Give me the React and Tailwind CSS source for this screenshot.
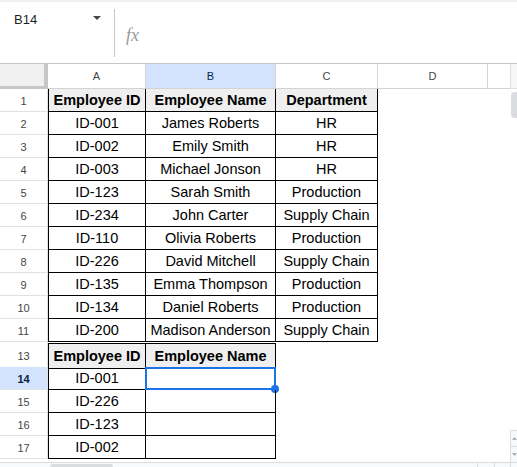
import React from "react";

const data = [
  ["ID-001", "James Roberts", "HR"],
  ["ID-002", "Emily Smith", "HR"],
  ["ID-003", "Michael Jonson", "HR"],
  ["ID-123", "Sarah Smith", "Production"],
  ["ID-234", "John Carter", "Supply Chain"],
  ["ID-110", "Olivia Roberts", "Production"],
  ["ID-226", "David Mitchell", "Supply Chain"],
  ["ID-135", "Emma Thompson", "Production"],
  ["ID-134", "Daniel Roberts", "Production"],
  ["ID-200", "Madison Anderson", "Supply Chain"],
];

const lookup = ["ID-001", "ID-226", "ID-123", "ID-002"];

const rowGrid = "grid grid-cols-[48px_98px_130px_102px_110px_22px]";

function RowHead({ n, active }) {
  return active ? (
    <div className="flex items-center justify-center pt-[2px] border-r border-b border-[#e1e1e1] bg-[#d3e3fd] text-[11px] font-bold text-[#0b1e45]">
      {n}
    </div>
  ) : (
    <div className="flex items-center justify-center pt-[2px] border-r border-b border-[#e1e1e1] text-[11px] text-[#444746]">
      {n}
    </div>
  );
}

function HeaderCell({ children, first }) {
  return (
    <div
      className={
        first
          ? "flex items-center justify-center pt-[2px] border-l border-r border-b border-black bg-[#efefef] text-[14.5px] font-bold text-black whitespace-nowrap overflow-hidden"
          : "flex items-center justify-center pt-[2px] border-r border-b border-black bg-[#efefef] text-[14.5px] font-bold text-black whitespace-nowrap overflow-hidden"
      }
    >
      {children}
    </div>
  );
}

function Cell({ children, first }) {
  return (
    <div
      className={
        first
          ? "flex items-center justify-center pt-[2px] border-l border-r border-b border-black text-[14.5px] text-black whitespace-nowrap overflow-hidden"
          : "flex items-center justify-center pt-[2px] border-r border-b border-black text-[14.5px] text-black whitespace-nowrap overflow-hidden"
      }
    >
      {children}
    </div>
  );
}

function Empty() {
  return <div />;
}

export default function App() {
  return (
    <div className="w-[517px] h-[467px] overflow-hidden bg-white flex flex-col font-['Liberation_Sans',Arial,sans-serif]">
      <div className="h-[2px] bg-[#eef0f3]" />
      {/* formula bar */}
      <div className="h-[61px] flex">
        <div className="w-[114px] flex items-start justify-between pt-[11px] pl-[14px] pr-[13px]">
          <span className="text-[13px] leading-[13px] text-[#1f1f1f]">B14</span>
          <svg width="8" height="4" viewBox="0 0 8 4" className="mt-[3px]">
            <path d="M0 0 L8 0 L4 4 Z" fill="#444746" />
          </svg>
        </div>
        <div className="w-px bg-[#c7c7c7] mt-[7px] mb-[6px]" />
        <div className="pl-[11px] pt-[20px]">
          <span className="font-['Liberation_Serif',serif] italic text-[18px] text-[#9a9a9a]">fx</span>
        </div>
      </div>

      {/* grid area */}
      <div className="flex flex-1 border-t border-[#c7c7c7]">
        <div className="w-[510px] flex flex-col">
          {/* column headers */}
          <div className={rowGrid + " h-[25px]"}>
            <div className="border-r-4 border-b-[3px] border-[#c4c7c5] bg-[#f0f0f0]" />
            <div className="flex items-center justify-center border-r border-b border-[#d3d3d3] text-[11px] text-[#444746]">A</div>
            <div className="flex items-center justify-center border-r border-b border-[#d3d3d3] bg-[#d3e3fd] text-[11px] text-[#0b1e45]">B</div>
            <div className="flex items-center justify-center border-r border-b border-[#d3d3d3] text-[11px] text-[#444746]">C</div>
            <div className="flex items-center justify-center border-r border-b border-[#d3d3d3] text-[11px] text-[#444746]">D</div>
            <div className="border-b border-[#d3d3d3]" />
          </div>

          {/* row 1 */}
          <div className={rowGrid + " h-[23px]"}>
            <RowHead n={1} />
            <HeaderCell first>Employee ID</HeaderCell>
            <HeaderCell>Employee Name</HeaderCell>
            <HeaderCell>Department</HeaderCell>
            <Empty />
            <Empty />
          </div>

          {data.map((r, i) => (
            <div key={i} className={rowGrid + " h-[23px]"}>
              <RowHead n={i + 2} />
              <Cell first>{r[0]}</Cell>
              <Cell>{r[1]}</Cell>
              <Cell>{r[2]}</Cell>
              <Empty />
              <Empty />
            </div>
          ))}

          {/* hidden row 12 */}
          <div className={rowGrid + " h-px"}>
            <div className="border-r border-[#e1e1e1]" />
          </div>

          {/* row 13 */}
          <div className={rowGrid + " h-[24px]"}>
            <div className="flex items-center justify-center pt-[2px] border-r border-b border-[#e1e1e1] text-[11px] text-[#444746]">13</div>
            <div className="flex items-center justify-center pt-[2px] border-t border-l border-r border-b border-black bg-[#efefef] text-[14.5px] font-bold text-black whitespace-nowrap">
              Employee ID
            </div>
            <div className="flex items-center justify-center pt-[2px] border-t border-r border-b border-black bg-[#efefef] text-[14.5px] font-bold text-black whitespace-nowrap">
              Employee Name
            </div>
            <Empty />
            <Empty />
            <Empty />
          </div>

          {lookup.map((id, i) => (
            <div key={id} className={rowGrid + " h-[23px]"}>
              <RowHead n={i + 14} active={i === 0} />
              <Cell first>{id}</Cell>
              <div className="relative border-r border-b border-black">
                {i === 0 && (
                  <div className="absolute -left-px top-0 -right-px -bottom-px border-2 border-[#1a73e8]">
                    <div className="absolute -right-[5px] -bottom-[5px] w-[8px] h-[8px] rounded-full bg-[#1a73e8]" />
                  </div>
                )}
              </div>
              <Empty />
              <Empty />
              <Empty />
            </div>
          ))}
        </div>

        {/* vertical scrollbar */}
        <div className="w-[7px] flex flex-col">
          <div className="h-[25px] border-l border-b border-[#e1e1e1] bg-[#f6f6f6]" />
          <div className="mt-[3px] ml-px h-[26px] rounded-l-[4px] bg-[#dadce0]" />
          <div className="flex-1" />
          <div className="h-[16px] border-l border-t border-[#dadce0] bg-[#f8f9fa] flex items-center pl-[1px]">
            <svg width="6" height="3" viewBox="0 0 6 3">
              <path d="M0 3 L3 0 L6 3 Z" fill="#9aa0a6" />
            </svg>
          </div>
          <div className="h-[16px] border-l border-t border-[#dadce0] bg-[#f8f9fa] flex items-center pl-[1px]">
            <svg width="6" height="3" viewBox="0 0 6 3">
              <path d="M0 0 L6 0 L3 3 Z" fill="#9aa0a6" />
            </svg>
          </div>
        </div>
      </div>

      {/* horizontal scrollbar */}
      <div className="h-[5px] flex border-t border-[#dadce0] bg-[#f8f9fa]">
        <div className="ml-[50px] mt-px w-[63px] rounded-t-[3px] bg-[#dadce0]" />
        <div className="ml-auto w-[17px] border-l border-[#dadce0]" />
        <div className="w-[16px] border-l border-[#dadce0]" />
        <div className="w-[7px] border-l border-[#dadce0]" />
      </div>
    </div>
  );
}
